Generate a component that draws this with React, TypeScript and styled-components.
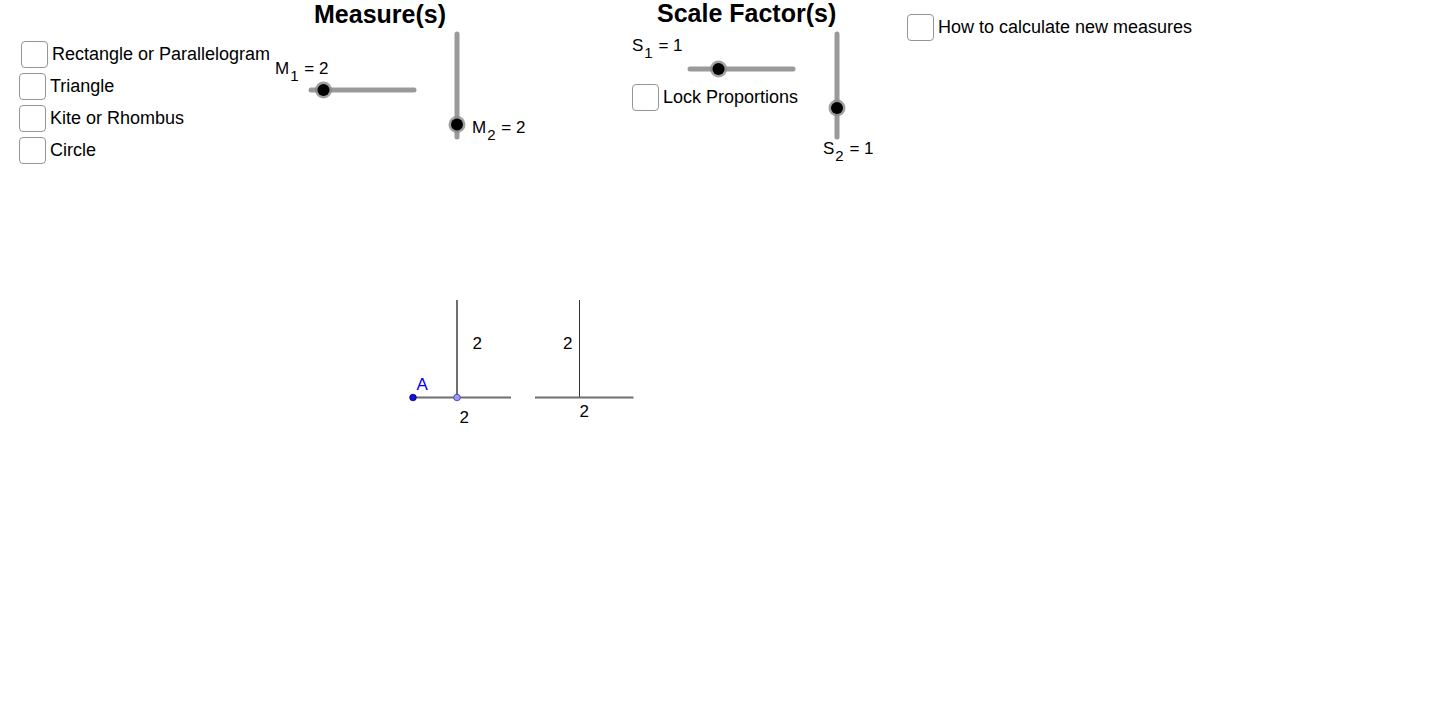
import React from "react";
import styled, { createGlobalStyle } from "styled-components";

const Global = createGlobalStyle`
  html, body { margin: 0; padding: 0; background: #fff; }
  body {
    font-family: "Liberation Sans", Arial, Helvetica, sans-serif;
    color: #000;
    overflow: hidden;
  }
`;

/* The GeoGebra graphics view: a free canvas where each object's place is its content */
const Canvas = styled.div`
  position: relative;
  width: 1436px;
  height: 708px;
  background: #fff;
  overflow: hidden;
`;

const Placed = styled.div<{ $x: number; $y: number }>`
  position: absolute;
  left: ${(p) => p.$x}px;
  top: ${(p) => p.$y}px;
`;

const Heading = styled(Placed)`
  font-weight: 700;
  font-size: 25px;
  line-height: 27px;
  white-space: nowrap;
`;

const CheckList = styled(Placed)`
  display: flex;
  flex-direction: column;
  gap: 5px;
`;

const CheckRow = styled.label<{ $indent?: number }>`
  display: flex;
  align-items: center;
  gap: 4px;
  height: 27px;
  margin-left: ${(p) => p.$indent ?? 0}px;
  font-size: 18px;
  line-height: 27px;
  white-space: nowrap;
  cursor: pointer;
`;

const Box = styled.span`
  box-sizing: border-box;
  width: 27px;
  height: 27px;
  flex: none;
  border: 1.5px solid #959595;
  border-radius: 4px;
  background: #fff;
`;

const SliderLabel = styled(Placed)`
  font-size: 17px;
  line-height: 17px;
  white-space: nowrap;
`;

const Sub = styled.span`
  font-size: 15px;
  position: relative;
  top: 7px;
  margin-left: 1px;
  margin-right: 1px;
`;

const SliderSvg = styled.svg`
  position: absolute;
  overflow: visible;
`;

const Drawing = styled.svg`
  position: absolute;
  overflow: visible;
  font-family: "Liberation Sans", Arial, sans-serif;
`;

type SliderProps = {
  x: number;
  y: number;
  length: number;
  vertical?: boolean;
  knob: number; // offset from start along track
};

function Slider({ x, y, length, vertical, knob }: SliderProps) {
  const pad = 10;
  const w = vertical ? pad * 2 : length + pad * 2;
  const h = vertical ? length + pad * 2 : pad * 2;
  const x2 = vertical ? pad : pad + length;
  const y2 = vertical ? pad + length : pad;
  const kx = vertical ? pad : pad + knob;
  const ky = vertical ? pad + knob : pad;
  return (
    <SliderSvg
      width={w}
      height={h}
      style={{ left: x - pad, top: y - pad }}
      viewBox={`0 0 ${w} ${h}`}
    >
      <line
        x1={pad}
        y1={pad}
        x2={x2}
        y2={y2}
        stroke="#9a9a9a"
        strokeWidth={5}
        strokeLinecap="round"
      />
      <circle cx={kx} cy={ky} r={8.5} fill="#8a8a8a" opacity={0.8} />
      <circle cx={kx} cy={ky} r={6} fill="#000" />
    </SliderSvg>
  );
}

function Check({ label, indent }: { label: string; indent?: number }) {
  return (
    <CheckRow $indent={indent}>
      <Box />
      <span>{label}</span>
    </CheckRow>
  );
}

export default function App() {
  return (
    <>
      <Global />
      <Canvas>
        <CheckList $x={19} $y={41}>
          <Check label="Rectangle or Parallelogram" indent={2} />
          <Check label="Triangle" />
          <Check label="Kite or Rhombus" />
          <Check label="Circle" />
        </CheckList>

        <Heading $x={314} $y={1}>Measure(s)</Heading>
        <Heading $x={657} $y={0}>Scale Factor(s)</Heading>

        <SliderLabel $x={275} $y={60}>
          M<Sub>1</Sub> = 2
        </SliderLabel>
        <Slider x={311} y={90} length={103} knob={12.5} />

        <Slider x={457} y={34} length={103} vertical knob={90.5} />
        <SliderLabel $x={472} $y={119}>
          M<Sub>2</Sub> = 2
        </SliderLabel>

        <SliderLabel $x={632} $y={37}>
          S<Sub>1</Sub> = 1
        </SliderLabel>
        <Slider x={690} y={69} length={103} knob={28.5} />

        <Placed $x={632} $y={84}>
          <Check label="Lock Proportions" />
        </Placed>

        <Slider x={837} y={34} length={103} vertical knob={74} />
        <SliderLabel $x={823} $y={140}>
          S<Sub>2</Sub> = 1
        </SliderLabel>

        <Placed $x={907} $y={14}>
          <Check label="How to calculate new measures" />
        </Placed>

        <Drawing
          width={250}
          height={140}
          viewBox="0 0 250 140"
          style={{ left: 400, top: 290 }}
        >
          <line x1={57} y1={10} x2={57} y2={107.5} stroke="#6f6f6f" strokeWidth={2} />
          <line x1={13} y1={107.5} x2={111} y2={107.5} stroke="#6f6f6f" strokeWidth={2} />
          <line x1={179.5} y1={10} x2={179.5} y2={107.5} stroke="#333" strokeWidth={1} />
          <line x1={135} y1={107.5} x2={233.5} y2={107.5} stroke="#6f6f6f" strokeWidth={2} />
          <circle cx={13} cy={107.5} r={3.3} fill="#1414d8" stroke="#00006a" strokeWidth={0.8} />
          <circle cx={57} cy={107.5} r={3.3} fill="#9a9aff" stroke="#3a3a8a" strokeWidth={0.8} />
          <text x={16.5} y={100} fontSize={17} fill="#0000ff">A</text>
          <text x={72.5} y={59} fontSize={17} fill="#000">2</text>
          <text x={59.5} y={133} fontSize={17} fill="#000">2</text>
          <text x={163} y={59} fontSize={17} fill="#000">2</text>
          <text x={179.5} y={126.5} fontSize={17} fill="#000">2</text>
        </Drawing>
      </Canvas>
    </>
  );
}
